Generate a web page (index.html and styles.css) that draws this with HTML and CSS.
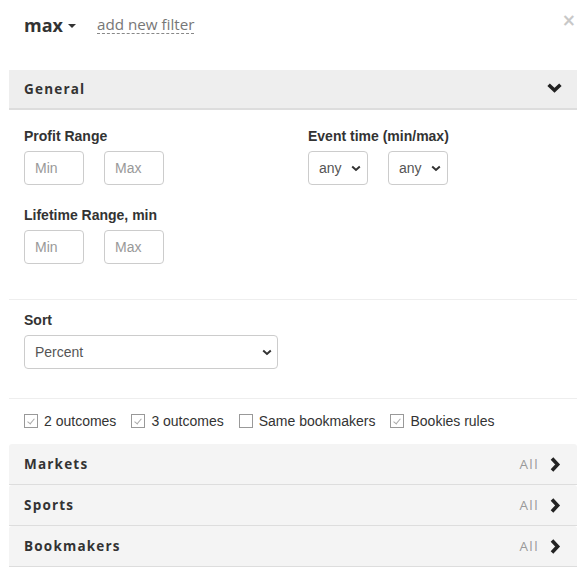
FILE: index.html
```html
<!DOCTYPE html>
<html>
<head>
<meta charset="utf-8">
<link rel="stylesheet" href="styles.css">
</head>
<body>
<div class="panel">
  <div class="top">
    <span class="title">max <span class="caret"></span></span>
    <span class="addnew">add new filter</span>
    <span class="close">×</span>
  </div>

  <div class="sec-head general">
    <span>General</span>
    <svg class="chev-down" width="15" height="10" viewBox="0 0 15 10"><path d="M1.6 1.8 L7.5 7.3 L13.4 1.8" fill="none" stroke="#222" stroke-width="3.6" stroke-linejoin="miter"/></svg>
  </div>

  <div class="general-body">
    <div class="grid2">
      <div class="field">
        <div class="label">Profit Range</div>
        <div class="pair">
          <input class="inp" placeholder="Min">
          <input class="inp" placeholder="Max">
        </div>
      </div>
      <div class="field">
        <div class="label">Event time (min/max)</div>
        <div class="pair">
          <select class="sel-small"><option>any</option></select>
          <select class="sel-small"><option>any</option></select>
        </div>
      </div>
      <div class="field">
        <div class="label">Lifetime Range, min</div>
        <div class="pair">
          <input class="inp" placeholder="Min">
          <input class="inp" placeholder="Max">
        </div>
      </div>
    </div>
  </div>

  <div class="sort-block">
    <div class="label">Sort</div>
    <select class="sel-wide"><option>Percent</option></select>
  </div>

  <div class="checks">
    <label class="chk"><span class="box on"></span>2 outcomes</label>
    <label class="chk"><span class="box on"></span>3 outcomes</label>
    <label class="chk"><span class="box"></span>Same bookmakers</label>
    <label class="chk"><span class="box on"></span>Bookies rules</label>
  </div>

  <div class="sec-head row">
    <span>Markets</span>
    <span class="right"><span class="all">All</span><svg class="chev-right" width="11" height="15" viewBox="0 0 11 15"><path d="M2 1.6 L7.6 7.5 L2 13.4" fill="none" stroke="#222" stroke-width="3.6"/></svg></span>
  </div>
  <div class="sec-head row">
    <span>Sports</span>
    <span class="right"><span class="all">All</span><svg class="chev-right" width="11" height="15" viewBox="0 0 11 15"><path d="M2 1.6 L7.6 7.5 L2 13.4" fill="none" stroke="#222" stroke-width="3.6"/></svg></span>
  </div>
  <div class="sec-head row">
    <span>Bookmakers</span>
    <span class="right"><span class="all">All</span><svg class="chev-right" width="11" height="15" viewBox="0 0 11 15"><path d="M2 1.6 L7.6 7.5 L2 13.4" fill="none" stroke="#222" stroke-width="3.6"/></svg></span>
  </div>
</div>
</body>
</html>
```
FILE: styles.css
```css
* { box-sizing: border-box; }
html, body { margin: 0; padding: 0; background: #fff; }
body {
  font-family: "Liberation Sans", Arial, sans-serif;
  font-size: 14px;
  color: #333;
}
.panel {
  padding: 0 11px 0 9px;
}
.top {
  display: flex;
  align-items: center;
  height: 50px;
  padding: 0 0 0 15px;
  position: relative;
}
.title {
  font-family: "Open Sans", sans-serif;
  font-weight: 700;
  font-size: 18px;
  color: #333;
  display: inline-flex;
  align-items: center;
}
.caret {
  display: inline-block;
  width: 0; height: 0;
  border-left: 4px solid transparent;
  border-right: 4px solid transparent;
  border-top: 4px solid #333;
  margin-left: 5px;
  margin-top: 2px;
}
.addnew {
  font-family: "Open Sans", sans-serif;
  font-size: 15.2px;
  color: #777;
  margin-left: 21px;
  border-bottom: 1px dashed #888;
  line-height: 18px;
  margin-top: -1px;
}
.close {
  position: absolute;
  right: 1px;
  top: 10px;
  font-family: "DejaVu Sans", sans-serif;
  font-size: 17px;
  color: #c8c8c8;
  font-weight: 700;
}
.sec-head {
  display: flex;
  align-items: center;
  justify-content: space-between;
  font-family: "Open Sans", sans-serif;
  font-weight: 700;
  font-size: 13.5px;
  letter-spacing: 1.2px;
  color: #333;
  padding: 0 15px;
}
.general {
  margin-top: 20px;
  height: 40px;
  background: #eee;
  border-bottom: 2px solid #ddd;
}
.chev-down { margin-right: 0; margin-top: -3px; }
.general-body {
  padding: 18px 15px 35px;
  border-bottom: 1px solid #eee;
}
.grid2 {
  display: grid;
  grid-template-columns: 284px 1fr;
  row-gap: 22px;
}
.label {
  font-weight: 700;
  font-size: 14px;
  color: #333;
  line-height: 16px;
  margin-bottom: 7px;
}
.pair { display: flex; gap: 20px; }
.inp {
  width: 60px;
  height: 34px;
  border: 1px solid #ccc;
  border-radius: 4px;
  padding: 0 10px;
  font-family: "Liberation Sans", Arial, sans-serif;
  font-size: 14px;
  color: #555;
  outline: none;
}
.inp::placeholder { color: #999; }
select {
  -webkit-appearance: none;
  appearance: none;
  height: 34px;
  border: 1px solid #ccc;
  border-radius: 4px;
  background-color: #fff;
  background-image: url("data:image/svg+xml,%3Csvg xmlns='http://www.w3.org/2000/svg' width='10' height='7' viewBox='0 0 10 7'%3E%3Cpath d='M1.2 1.5 L5 5 L8.8 1.5' fill='none' stroke='%23333' stroke-width='2'/%3E%3C/svg%3E");
  background-repeat: no-repeat;
  font-family: "Liberation Sans", Arial, sans-serif;
  font-size: 14px;
  color: #555;
  outline: none;
}
.sel-small {
  width: 60px;
  padding: 0 0 0 10px;
  background-position: right 6px center;
}
.sort-block {
  padding: 12px 15px 29px;
  border-bottom: 1px solid #eee;
}
.sort-block .label { margin-bottom: 7px; }
.sel-wide {
  width: 254px;
  padding: 0 0 0 10px;
  background-position: right 5px center;
}
.checks {
  display: flex;
  align-items: center;
  gap: 15px;
  padding: 0 15px 2px;
  height: 45px;
}
.chk {
  display: inline-flex;
  align-items: center;
  font-size: 14px;
  color: #333;
}
.box {
  width: 14px; height: 14px;
  border: 1px solid #999;
  margin-right: 6px;
  background: #fff;
  position: relative;
}
.box.on::after {
  content: "";
  position: absolute;
  left: 4px; top: 2px;
  width: 3px; height: 6px;
  border-right: 1px solid #aaa;
  border-bottom: 1px solid #aaa;
  transform: rotate(40deg);
}
.row {
  height: 41px;
  background: #f4f4f4;
  border-bottom: 1px solid #ddd;
  border-radius: 3px 3px 0 0;
  padding-right: 16px;
}
.right { display: inline-flex; align-items: center; }
.all {
  font-weight: 400;
  color: #999;
  font-size: 13.5px;
  letter-spacing: 1.4px;
  margin-right: 11px;
}
.chev-right { margin-right: 0; }
```
